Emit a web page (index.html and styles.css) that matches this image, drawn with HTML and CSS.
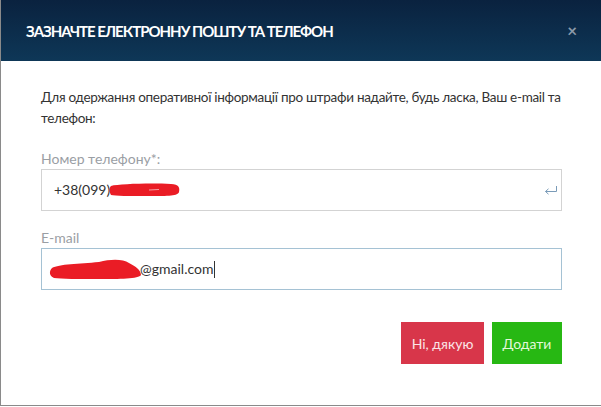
FILE: index.html
```html
<!DOCTYPE html>
<html>
  <head>
    <meta charset="UTF-8" />
    <meta name="viewport" content="width=device-width, initial-scale=1.0" />
    <title>Зазначте електронну пошту та телефон</title>
    <link rel="stylesheet" href="styles.css">
  </head>

  <body>
    <div class="modal">
      <div class="modal-header">
        <h2 class="modal-title">Зазначте електронну пошту та телефон</h2>
        <span class="modal-close">&times;</span>
      </div>

      <div class="modal-body">
        <p class="intro">
          Для одержання оперативної інформації про штрафи надайте, будь ласка, Ваш e-mail та телефон:
        </p>

        <div class="field">
          <label class="field-label">Номер телефону*:</label>
          <div class="input">
            <span class="value">+38(099)</span>
            <!-- redacted part of the number -->
            <svg class="blot" width="72" height="14" viewBox="0 0 72 14">
              <path d="M2 3 C10 1 40 0 62 1 C70 1 71 5 70 9 C69 13 60 13 40 13 C20 13 6 13 2 12 C0 9 0 5 2 3 Z" fill="#ea1c25" />
              <path d="M40 7 L50 6.5" stroke="#f5a0a4" stroke-width="1" />
            </svg>
            <svg class="enter-icon" width="14" height="10" viewBox="0 0 14 10">
              <path d="M12.5 1 V6.5 H1.5 M1.5 6.5 L4.5 3.8 M1.5 6.5 L4.5 9.2" fill="none" stroke="#7a9bb8" stroke-width="1" />
            </svg>
          </div>
        </div>

        <div class="field">
          <label class="field-label">E-mail</label>
          <div class="input focused">
            <svg class="blot blot-mail" width="93" height="22" viewBox="0 0 93 22">
              <path d="M3 10 C10 6 30 6 50 4 C62 1 74 1 80 5 C86 8 92 12 92 17 C90 21 70 21 50 21 C30 21 12 21 5 20 C0 18 0 13 3 10 Z" fill="#ea1c25" />
            </svg>
            <span class="value">@gmail.com</span><span class="caret"></span>
          </div>
        </div>

        <div class="actions">
          <button class="btn btn-decline">Ні, дякую</button>
          <button class="btn btn-add">Додати</button>
        </div>
      </div>
    </div>
  </body>
</html>
```

FILE: styles.css
```css
body {
  margin: 0;
  background-color: #ffffff;
  font-family: Lato, "Open Sans", sans-serif;
}

.modal {
  width: 600px;
  height: 405px;
  border-left: 1px solid #8a8a8a;
  border-bottom: 1px solid #8a8a8a;
  background-color: #fff;
}

.modal-header {
  height: 61px;
  padding: 0 24px 0 25px;
  display: flex;
  align-items: center;
  justify-content: space-between;
  background: linear-gradient(to bottom, #0a223f, #0e3757);
}
.modal-title {
  margin: 0;
  color: #ffffff;
  font-size: 15px;
  font-weight: 700;
  letter-spacing: -1px;
  text-transform: uppercase;
}
.modal-close {
  color: #8b9aaa;
  font-size: 17px;
  font-weight: 700;
}

.modal-body {
  padding: 26px 39px 0 40px;
}

.intro {
  margin: 0 0 19px;
  max-width: 525px;
  color: #333333;
  font-size: 13.5px;
  line-height: 21px;
  letter-spacing: -0.3px;
}

.field {
  margin-bottom: 16px;
}
.field-label {
  display: block;
  color: #9a9ea4;
  font-size: 14px;
  line-height: 21px;
}

.input {
  height: 40px;
  padding: 0 3px 0 12px;
  display: flex;
  align-items: center;
  border: 1px solid #d3d3d3;
  color: #333333;
  font-size: 14px;
}
.input.focused {
  border-color: #a5c2d4;
  padding-left: 7px;
}
.value {
  line-height: 20px;
}
.blot {
  display: block;
  margin-left: -1px;
}
.blot-mail {
  margin: 0 -2px 0 0;
}
.caret {
  width: 1px;
  height: 17px;
  background-color: #333;
  margin-left: 1px;
}
.enter-icon {
  margin-left: auto;
}

.actions {
  margin-top: 32px;
  display: flex;
  justify-content: flex-end;
  column-gap: 8px;
}
.btn {
  height: 42px;
  border: none;
  padding: 0;
  white-space: nowrap;
  font-family: Lato, "Open Sans", sans-serif;
  font-size: 14px;
}
.btn-decline {
  width: 83px;
  background-color: #d8364a;
  color: #fbe3e6;
}
.btn-add {
  width: 70px;
  background-color: #27b813;
  color: #e4f8da;
}
```
